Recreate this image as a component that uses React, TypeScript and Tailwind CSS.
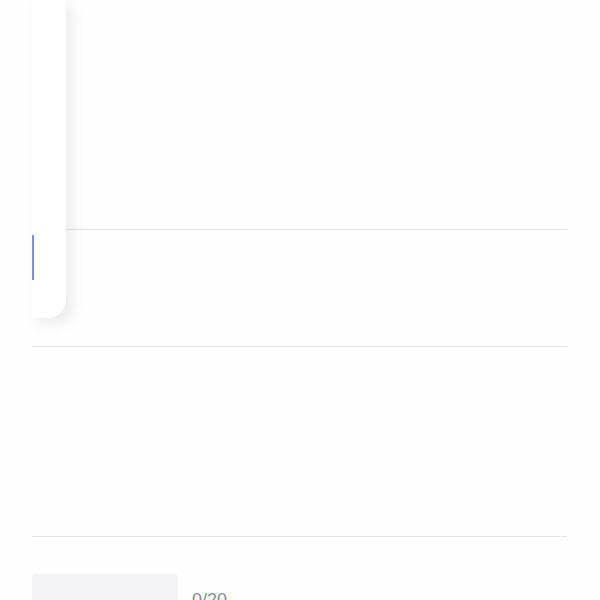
import React from "react";

export default function App() {
  return (
    <div
      className="relative h-[600px] w-[600px] overflow-hidden bg-[#fefefe]"
      style={{ fontFamily: '"Liberation Sans", Arial, sans-serif' }}
    >
      {/* 列表区域 */}
      <div className="ml-[32px] w-[535px] flex flex-col">
        <div className="h-[230px] border-b border-[#e6e6e8]" />
        <div className="h-[117px] border-b border-[#e6e6e8]" />
        <div className="h-[190px] border-b border-[#e6e6e8]" />
        <div className="mt-[37px] flex items-start gap-[14px]">
          <div className="h-[40px] w-[146px] rounded-[4px] bg-[#f4f4f8]" />
          <span className="mt-[17px] text-[18px] leading-none text-[#8a8a8e]">0/20</span>
        </div>
      </div>

      {/* 侧边卡片 */}
      <div className="absolute left-[32px] top-0 h-[318px] w-[34px] rounded-br-[18px] bg-white shadow-[6px_6px_14px_rgba(0,0,0,0.08)]">
        <div className="absolute left-0 top-[235px] h-[45px] w-[2px] bg-[#7f8ddc]" />
      </div>
    </div>
  );
}
